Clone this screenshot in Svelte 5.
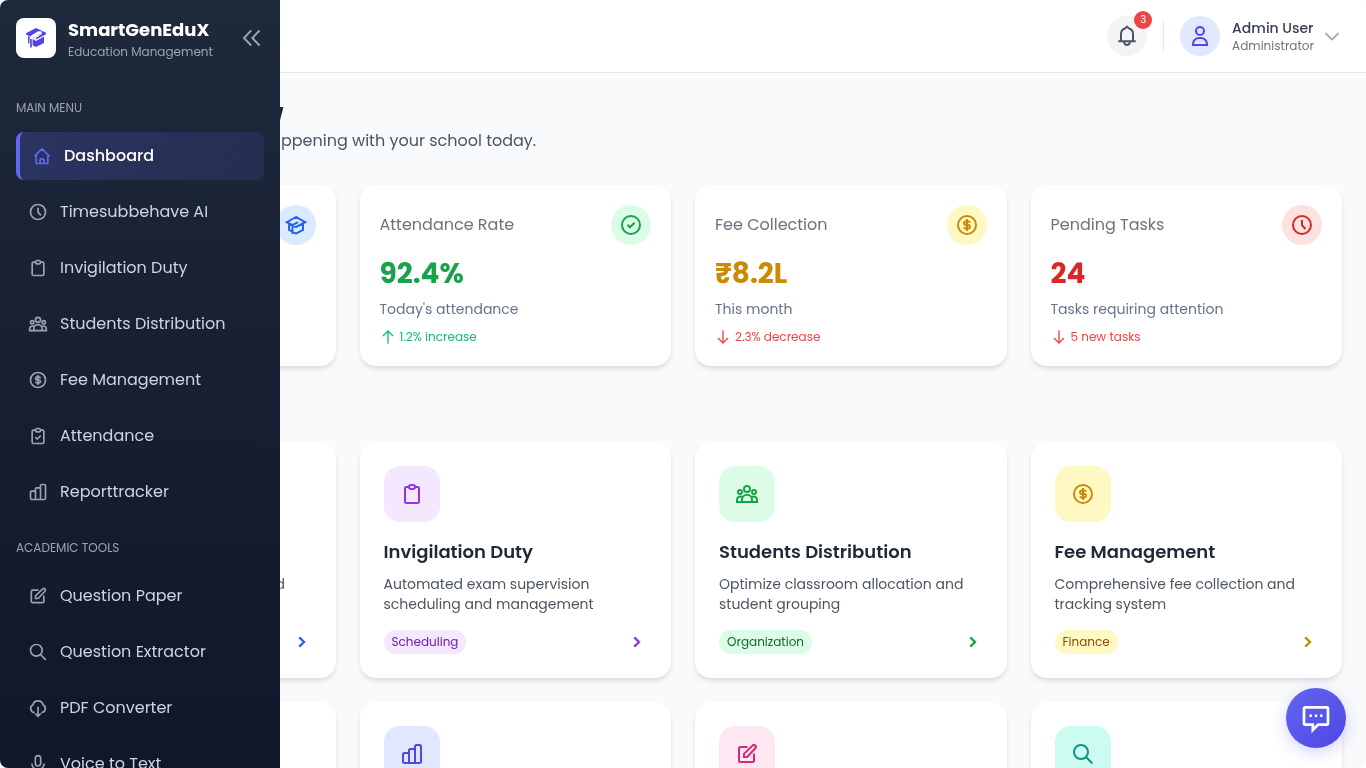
<script>
  const icons = {
    home: 'M2.8 12.3 12 3.4l9.2 8.9M5 11v10h14V11M9.7 21v-4.2a1.4 1.4 0 0 1 1.4-1.4h1.8a1.4 1.4 0 0 1 1.4 1.4V21',
    clock: 'M12 3a9 9 0 1 0 0 18 9 9 0 0 0 0-18M12 7v5.2l3.4 3.8',
    clipboard: 'M9 5H6.5A1.5 1.5 0 0 0 5 6.5v13A1.5 1.5 0 0 0 6.5 21h11a1.5 1.5 0 0 0 1.5-1.5v-13A1.5 1.5 0 0 0 17.5 5H15M11 3h2a2 2 0 0 1 0 4h-2a2 2 0 0 1 0-4z',
    clipcheck: 'M9 5H6.5A1.5 1.5 0 0 0 5 6.5v13A1.5 1.5 0 0 0 6.5 21h11a1.5 1.5 0 0 0 1.5-1.5v-13A1.5 1.5 0 0 0 17.5 5H15M11 3h2a2 2 0 0 1 0 4h-2a2 2 0 0 1 0-4zM8.7 13.2l2.4 2.4 4.2-4.2',
    group: 'M12 4a3 3 0 1 0 0 6 3 3 0 0 0 0-6M5 8a2 2 0 1 0 0 4 2 2 0 0 0 0-4M19 8a2 2 0 1 0 0 4 2 2 0 0 0 0-4M7 20v-2.2a5 5 0 0 1 10 0V20M7.6 15.4A3.3 3.3 0 0 0 2 17.8V20h20v-2.2a3.3 3.3 0 0 0-5.6-2.4',
    dollar: 'M12 3a9 9 0 1 0 0 18 9 9 0 0 0 0-18M15 9.8a1.8 1.8 0 0 0-1.8-1.3h-2.4a1.75 1.75 0 0 0 0 3.5h2.4a1.75 1.75 0 0 1 0 3.5h-2.4A1.8 1.8 0 0 1 9 14.2M12 6v12',
    check: 'M12 3a9 9 0 1 0 0 18 9 9 0 0 0 0-18M8.4 11.8l2.5 2.5 4.7-4.6',
    bars: 'M9 21H4.5A1.5 1.5 0 0 1 3 19.5v-7A1.5 1.5 0 0 1 4.5 11h3A1.5 1.5 0 0 1 9 12.5zV8.5A1.5 1.5 0 0 1 10.500 7h3A1.5 1.5 0 0 1 15 8.500V21M9 21h10.500a1.500 1.500 0 0 0 1.500-1.500v-15A1.500 1.500 0 0 0 19.500 3h-3A1.500 1.500 0 0 0 15 4.500V21',
    edit: 'M12.5 5H5.5A1.5 1.5 0 0 0 4 6.5v12A1.5 1.5 0 0 0 5.5 20h12a1.5 1.5 0 0 0 1.5-1.5v-7M9 15v-3.2l8.5-8.2a1.9 1.9 0 0 1 2.8 2.7L12.2 15z',
    search: 'M10 3a7 7 0 1 0 0 14 7 7 0 0 0 0-14M15 15l6.4 6.4',
    cloud: 'M8 17.4h-.6A5 5 0 0 1 6 8a6.2 6.2 0 0 1 12 0 5 5 0 0 1-1.4 9.4H16M12 10.5v11.4M8.6 18.6l3.4 3.4 3.4-3.4',
    mic: 'M12 2a3.2 3.2 0 0 1 3.2 3.2v6a3.2 3.2 0 0 1-6.4 0v-6A3.2 3.2 0 0 1 12 2zM4.6 11.5a7.4 7.4 0 0 0 14.8 0M12 19v3',
    cap: 'M12 4 2.8 9.2 12 14l9.2-4.8zM14 9.2 8.5 12v9M5 10.5V17l7 3.6 7-3.6v-6.5',
    bell: 'M3.3 17.2h17.4M6 17V9.8a6 6 0 0 1 4.4-5.6L12 2.6l1.6 1.6A6 6 0 0 1 18 9.8V17M9 17.6a3 3.4 0 0 0 6 0',
    user: 'M12 3a4 4 0 1 0 0 8 4 4 0 0 0 0-8M5 21v-1a6 6 0 0 1 6-6h2a6 6 0 0 1 6 6v1z',
    collapse: 'M11.2 4.4 4 12l7.2 7.6M19.6 4.4 12.4 12l7.2 7.6',
    down: 'M4.2 8.6 12 16.2l7.8-7.6',
    next: 'M8.7 6.4 14.4 12l-5.7 5.6',
    arrowUp: 'M12 22V3M4.5 10.5 12 3l7.5 7.5',
    arrowDown: 'M12 2v19M4.5 13.5 12 21l7.5-7.5',
    chat: 'M4 4h16a1 1 0 0 1 1 1v11a1 1 0 0 1-1 1h-6.4l-4 4v-4H4a1 1 0 0 1-1-1V5a1 1 0 0 1 1-1z',
  };

  const menus = [
    {
      title: 'MAIN MENU',
      items: [
        { name: 'Dashboard', icon: 'home', active: true },
        { name: 'Timesubbehave AI', icon: 'clock' },
        { name: 'Invigilation Duty', icon: 'clipboard' },
        { name: 'Students Distribution', icon: 'group' },
        { name: 'Fee Management', icon: 'dollar' },
        { name: 'Attendance', icon: 'clipcheck' },
        { name: 'Reporttracker', icon: 'bars' },
      ],
    },
    {
      title: 'ACADEMIC TOOLS',
      items: [
        { name: 'Question Paper', icon: 'edit' },
        { name: 'Question Extractor', icon: 'search' },
        { name: 'PDF Converter', icon: 'cloud' },
        { name: 'Voice to Text', icon: 'mic' },
      ],
    },
  ];

  const stats = [
    { icon: 'cap', color: 'blue' },
    { label: 'Attendance Rate', value: '92.4%', note: "Today's attendance", trend: '1.2% increase', up: true, icon: 'check', color: 'green' },
    { label: 'Fee Collection', value: '₹8.2L', note: 'This month', trend: '2.3% decrease', icon: 'dollar', color: 'yellow' },
    { label: 'Pending Tasks', value: '24', note: 'Tasks requiring attention', trend: '5 new tasks', icon: 'clock', color: 'red' },
  ];

  const modules = [
    { lines: ['Smart timetable generation and', ''], icon: 'clock', color: 'blue', wide: true },
    { name: 'Invigilation Duty', lines: ['Automated exam supervision', 'scheduling and management'], tag: 'Scheduling', icon: 'clipboard', color: 'purple' },
    { name: 'Students Distribution', lines: ['Optimize classroom allocation and', 'student grouping'], tag: 'Organization', icon: 'group', color: 'green' },
    { name: 'Fee Management', lines: ['Comprehensive fee collection and', 'tracking system'], tag: 'Finance', icon: 'dollar', color: 'yellow' },
    { icon: 'clipcheck', color: 'blue' },
    { icon: 'bars', color: 'indigo' },
    { icon: 'edit', color: 'pink' },
    { icon: 'search', color: 'teal' },
  ];
</script>

{#snippet icon(name, size, stroke)}
  <svg class="icon" width={size} height={size} viewBox="0 0 24 24" fill="none" stroke="currentColor" stroke-width={stroke}>
    <path d={icons[name]} />
  </svg>
{/snippet}

<div class="page">
  <header class="topbar">
    <button class="bell" aria-label="Notifications">
      {@render icon('bell', 24, 2)}
      <span class="badge">3</span>
    </button>
    <div class="divider"></div>
    <div class="profile">
      <div class="avatar">{@render icon('user', 24, 2)}</div>
      <div class="who">
        <div class="name">Admin User</div>
        <div class="role">Administrator</div>
      </div>
      <div class="caret">{@render icon('down', 20, 2)}</div>
    </div>
  </header>

  <main>
    <h1>Dashboard Overview</h1>
    <p class="intro">Welcome back! Here's what's happening with your school today.</p>

    <div class="grid stats">
      {#each stats as s}
        <article class="card stat {s.color}">
          <div class="stat-head">
            <span>{s.label ?? ''}</span>
            <div class="round">{@render icon(s.icon, 24, 2)}</div>
          </div>
          {#if s.value}
            <div class="value">{s.value}</div>
            <div class="note">{s.note}</div>
            <div class="trend" class:up={s.up}>
              {@render icon(s.up ? 'arrowUp' : 'arrowDown', 16, 2)}
              <span>{s.trend}</span>
            </div>
          {/if}
        </article>
      {/each}
    </div>

    <div class="grid">
      {#each modules as m}
        <article class="card module {m.color}">
          <div class="tile">{@render icon(m.icon, 24, 2)}</div>
          {#if m.lines}
            <h3>{m.name ?? ''}</h3>
            <p class="desc" class:wide={m.wide}>
              {#each m.lines as text}
                <span class="line">{text}</span>
              {/each}
            </p>
            <div class="foot">
              {#if m.tag}<span class="tag">{m.tag}</span>{/if}
              <span class="next">{@render icon('next', 20, 2.8)}</span>
            </div>
          {/if}
        </article>
      {/each}
    </div>
  </main>

  <aside class="sidebar">
    <div class="brand">
      <div class="logo">
        <svg width="24" height="24" viewBox="0 0 24 24" fill="currentColor">
          <path d="M4 10v7l8 4 8-4v-6.5l-8 4.5z" />
          <path d="M12 2 2 7.3v1.2L12 13.6l10-5.4V6.8z" />
          <path d="M17.6 7.2 14.6 7 8.4 10.6Q7 11.6 7 14v9" fill="none" stroke="#fff" stroke-width="3.2" />
          <path d="M15.5 9.2 10.5 12l1.5 1.4" fill="none" stroke="#fff" stroke-width="1.2" />
          <path d="M7 13v8.6" stroke="currentColor" stroke-width="1.7" />
        </svg>
      </div>
      <div class="brand-text">
        <div class="brand-name">SmartGenEduX</div>
        <div class="brand-sub">Education Management</div>
      </div>
      <div class="collapse">{@render icon('collapse', 24, 2)}</div>
    </div>
    <nav>
      {#each menus as menu}
        <section>
          <div class="section-title">{menu.title}</div>
          {#each menu.items as item}
            <div class="item" class:active={item.active}>
              {@render icon(item.icon, 20, 2)}
              <span>{item.name}</span>
            </div>
          {/each}
        </section>
      {/each}
    </nav>
  </aside>

  <button class="chat" aria-label="Chat">
    <svg width="32" height="32" viewBox="0 0 24 24" fill="none" stroke="currentColor" stroke-width="2">
      <path d={icons.chat} />
      <path d="M7.1 10.3h1.8M11.1 10.3h1.8M15.1 10.3h1.8" stroke-width="1.8" />
    </svg>
  </button>
</div>

<style>
  :global(body) { margin: 0; background: #fff; }
  * { box-sizing: border-box; }
  .page {
    position: relative;
    width: 1366px;
    height: 768px;
    overflow: hidden;
    border-radius: 8px;
    background: #f9fafb;
    color: #1f2937;
    font-family: Poppins, Inter, sans-serif;
    font-size: 16px;
    line-height: 24px;
    white-space: nowrap;
    will-change: transform;
  }
  h1, h3, p { margin: 0; }
  button { border: 0; padding: 0; font: inherit; }
  .icon { display: block; flex: none; }

  .topbar {
    height: 73px;
    padding: 0 24px;
    display: flex;
    align-items: center;
    justify-content: flex-end;
    gap: 16px;
    background: #fff;
    border-bottom: 1px solid #e2e8f0;
  }
  .bell {
    position: relative;
    display: grid;
    place-items: center;
    width: 40px;
    height: 40px;
    border-radius: 50%;
    background: #f3f4f6;
    color: #4b5563;
  }
  .badge {
    position: absolute;
    top: -5px;
    right: -5px;
    width: 18px;
    height: 18px;
    border-radius: 50%;
    background: #ef4444;
    color: #fff;
    font-size: 10px;
    line-height: 18px;
    text-align: center;
  }
  .divider { width: 1px; height: 32px; background: #e5e7eb; }
  .profile { display: flex; align-items: center; }
  .avatar {
    display: grid;
    place-items: center;
    width: 40px;
    height: 40px;
    margin-right: 12px;
    border-radius: 50%;
    background: #e0e7ff;
    color: #4f46e5;
  }
  .name { font-size: 14px; font-weight: 500; line-height: 20px; color: #374151; }
  .role { font-size: 12px; line-height: 16px; color: #6b7280; }
  .caret { margin-left: 8px; color: #9ca3af; }

  main { padding: 24px; }
  h1 { font-size: 24px; font-weight: 700; line-height: 32px; }
  .intro { margin-bottom: 32px; color: #4b5563; }
  .grid { display: grid; grid-template-columns: repeat(4, 1fr); gap: 24px; }
  .stats { margin-bottom: 76px; }
  .card {
    min-width: 0;
    border-radius: 16px;
    background: #fff;
    box-shadow: 0 4px 6px -1px rgba(0, 0, 0, 0.1), 0 2px 4px -1px rgba(0, 0, 0, 0.06);
  }
  .stat { height: 181px; padding: 20px; }
  .stat-head { display: flex; align-items: center; justify-content: space-between; height: 40px; color: #6b7280; }
  .round { display: grid; place-items: center; width: 40px; height: 40px; border-radius: 50%; background: var(--soft); color: var(--main); }
  .value { margin-top: 8px; font-size: 28px; font-weight: 700; line-height: 42px; color: var(--main); }
  .note { margin-top: 3px; font-size: 14px; line-height: 22px; color: #64748b; }
  .trend { display: flex; align-items: center; gap: 4px; margin-top: 8px; font-size: 12px; line-height: 18px; color: #ef4444; }
  .trend.up { color: #10b981; }

  .module { height: 236px; padding: 24px; }
  .tile { display: grid; place-items: center; width: 56px; height: 56px; border-radius: 16px; background: var(--soft); color: var(--main); }
  h3 { height: 28px; margin: 16px 0 8px; font-size: 18px; font-weight: 600; line-height: 28px; }
  .desc { height: 40px; font-size: 14px; line-height: 20px; color: #4b5563; }
  .desc.wide { width: 237px; text-align: right; }
  .line { display: block; }
  .foot { display: flex; align-items: center; height: 24px; margin-top: 16px; color: var(--main); }
  .next { margin-left: auto; }
  .tag { padding: 0 8px; border-radius: 12px; background: var(--soft); color: var(--deep); font-size: 12px; line-height: 24px; }

  .blue { --soft: #dbeafe; --main: #2563eb; --deep: #1e40af; }
  .green { --soft: #dcfce7; --main: #16a34a; --deep: #166534; }
  .yellow { --soft: #fef9c3; --main: #ca8a04; --deep: #854d0e; }
  .red { --soft: #fee2e2; --main: #dc2626; --deep: #991b1b; }
  .purple { --soft: #f3e8ff; --main: #9333ea; --deep: #6b21a8; }
  .indigo { --soft: #e0e7ff; --main: #4f46e5; --deep: #3730a3; }
  .pink { --soft: #fce7f3; --main: #db2777; --deep: #9d174d; }
  .teal { --soft: #ccfbf1; --main: #0d9488; --deep: #115e59; }

  .sidebar {
    position: absolute;
    inset: 0 auto 0 0;
    width: 280px;
    overflow: hidden;
    background: linear-gradient(180deg, #1e293b, #0f172a);
    color: #cbd5e1;
  }
  .brand { display: flex; align-items: center; height: 76px; padding: 0 16px; }
  .logo { display: grid; place-items: center; width: 40px; height: 40px; margin-right: 12px; border-radius: 8px; background: #fff; color: #4f46e5; }
  .brand-text { flex: 1; }
  .brand-name { font-size: 18px; font-weight: 700; line-height: 28px; color: #fff; }
  .brand-sub { font-size: 12px; line-height: 16px; color: #9ca3af; }
  .collapse { color: #9ca3af; }
  nav { padding: 24px 16px; display: flex; flex-direction: column; gap: 24px; }
  section { display: flex; flex-direction: column; gap: 8px; }
  .section-title { margin-bottom: 8px; font-size: 12px; line-height: 16px; color: #9ca3af; }
  .item { display: flex; align-items: center; gap: 12px; height: 48px; padding: 0 12px; border-radius: 8px; }
  .item .icon { color: #9ca3af; }
  .item.active {
    border-left: 4px solid #6366f1;
    background: linear-gradient(90deg, rgba(99, 102, 241, 0.22), rgba(99, 102, 241, 0.14));
    color: #fff;
    font-weight: 500;
  }
  .item.active .icon { color: #6366f1; }

  .chat {
    position: absolute;
    right: 20px;
    bottom: 20px;
    display: grid;
    place-items: center;
    width: 60px;
    height: 60px;
    border-radius: 50%;
    background: linear-gradient(135deg, #6366f1, #4f46e5);
    color: #fff;
    box-shadow: 0 4px 15px rgba(99, 102, 241, 0.3);
  }
</style>
